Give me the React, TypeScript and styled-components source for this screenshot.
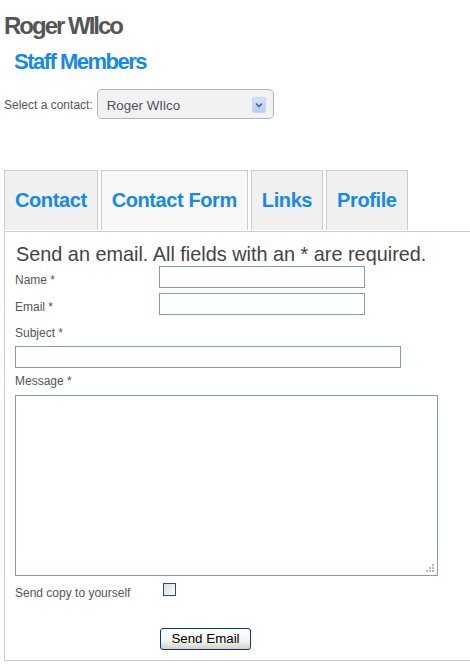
import React from 'react'
import styled, { createGlobalStyle } from 'styled-components'

const blue = '#168ae6'
const textGray = '#555'
const inputBorder = '#7f9db9'

const GlobalStyle = createGlobalStyle`
  html, body {
    margin: 0;
    padding: 0;
    background: #fff;
    font-family: Arial, 'Liberation Sans', Helvetica, sans-serif;
    overflow: hidden;
  }
`

const Page = styled.div`
  padding-left: 4px;
`

const Title = styled.h1`
  margin: 12px 0 0 0;
  font-size: 24px;
  line-height: 28px;
  font-weight: 700;
  letter-spacing: -2px;
  color: ${textGray};
`

const SubTitle = styled.h2`
  margin: 9px 0 0 0;
  padding-left: 10px;
  font-size: 22px;
  line-height: 26px;
  font-weight: 700;
  letter-spacing: -1.5px;
  color: ${blue};
`

const ContactRow = styled.div`
  margin-top: 14px;
  display: flex;
  align-items: center;
  gap: 4px;
`

const ContactLabel = styled.span`
  font-size: 12px;
  line-height: 14px;
  color: ${textGray};
  margin-top: 2px;
`

const SelectBox = styled.div`
  width: 177px;
  height: 30px;
  box-sizing: border-box;
  border: 1px solid #b4b4b4;
  border-radius: 5px;
  background: #f1f3f3;
  display: flex;
  align-items: center;
  justify-content: space-between;
  padding: 0 7px 0 9px;
`

const SelectValue = styled.span`
  font-size: 13.33px;
  color: #4f4f5f;
  margin-top: 2px;
`

const ArrowBox = styled.span`
  width: 14px;
  height: 16px;
  border-radius: 2px;
  background: linear-gradient(#d6e2fc, #b7cbf5);
  border: 1px solid #c6d6f7;
  box-sizing: border-box;
  display: flex;
  align-items: center;
  justify-content: center;
  margin-top: 2px;
`

const Tabs = styled.div`
  margin-top: 51px;
  display: flex;
  gap: 3px;
  margin-bottom: 1px;
`

const Tab = styled.div<{ $active?: boolean }>`
  height: 60px;
  box-sizing: border-box;
  padding: 0 10px;
  border: 1px solid #ccc;
  border-bottom: none;
  background: ${(p) => (p.$active ? '#f8f8f8' : '#f0f0f0')};
  font-size: 20px;
  line-height: 59px;
  font-weight: 700;
  letter-spacing: -0.4px;
  color: ${blue};
`

const Panel = styled.div`
  border: 1px solid #ccc;
  border-right: none;
  padding: 11px 0 10px 10px;
`

const Intro = styled.p`
  margin: 0 0 0 1px;
  font-size: 19.85px;
  line-height: 23px;
  color: #444;
`

const InlineRow = styled.div`
  display: grid;
  grid-template-columns: 144px auto;
  align-items: start;
  margin-bottom: 5px;
`

const Label = styled.label`
  display: block;
  font-size: 12px;
  line-height: 14px;
  color: ${textGray};
`

const InlineLabel = styled(Label)`
  padding-top: 6.5px;
`

const TextInput = styled.input<{ $width: number }>`
  display: block;
  margin: 0;
  width: ${(p) => p.$width}px;
  height: 22px;
  box-sizing: border-box;
  border: 1px solid ${inputBorder};
  padding: 2px 3px;
  font-family: inherit;
  font-size: 13px;
  background: #fff;
  outline: none;
`

const Stack = styled.div<{ $top: number }>`
  margin-top: ${(p) => p.$top}px;
`

const StackLabel = styled(Label)<{ $gap: number }>`
  margin-bottom: ${(p) => p.$gap}px;
`

const MessageWrap = styled.div`
  position: relative;
  width: 423px;
  height: 181px;
`

const MessageArea = styled.textarea`
  display: block;
  margin: 0;
  width: 423px;
  height: 181px;
  box-sizing: border-box;
  border: 1px solid ${inputBorder};
  resize: none;
  outline: none;
  font-family: inherit;
`

const Grip = styled.svg`
  position: absolute;
  right: 3px;
  bottom: 3px;
`

const CopyRow = styled.div`
  margin-top: 7px;
  display: grid;
  grid-template-columns: 144px auto;
  align-items: start;
`

const CopyLabel = styled(Label)`
  padding-top: 2.5px;
`

const CheckBox = styled.input`
  appearance: none;
  margin: 0 0 0 4px;
  width: 13px;
  height: 13px;
  box-sizing: border-box;
  border: 1px solid #1c5180;
  background: linear-gradient(135deg, #dcdcd7, #fbfbf9);
`

const ButtonRow = styled.div`
  margin-top: 28px;
  padding-left: 145px;
`

const SendButton = styled.button`
  width: 91px;
  height: 22px;
  padding: 0;
  border: 1px solid #003c74;
  border-radius: 3px;
  background: linear-gradient(#ffffff, #f3f3ef 60%, #d6d0c5);
  font-family: inherit;
  font-size: 13.33px;
  color: #000;
`

const tabs = ['Contact', 'Contact Form', 'Links', 'Profile']

export default function App() {
  return (
    <Page>
      <GlobalStyle />
      <Title>Roger WIlco</Title>
      <SubTitle>Staff Members</SubTitle>

      <ContactRow>
        <ContactLabel>Select a contact:</ContactLabel>
        <SelectBox>
          <SelectValue>Roger WIlco</SelectValue>
          <ArrowBox>
            <svg width="8" height="6" viewBox="0 0 8 6">
              <path d="M1 1.5 L4 4.5 L7 1.5" fill="none" stroke="#4d6185" strokeWidth="1.6" />
            </svg>
          </ArrowBox>
        </SelectBox>
      </ContactRow>

      <Tabs>
        {tabs.map((t) => (
          <Tab key={t} $active={t === 'Contact Form'}>
            {t}
          </Tab>
        ))}
      </Tabs>

      <Panel>
        <Intro>Send an email. All fields with an * are required.</Intro>

        <InlineRow>
          <InlineLabel>Name *</InlineLabel>
          <TextInput $width={206} />
        </InlineRow>
        <InlineRow>
          <InlineLabel>Email *</InlineLabel>
          <TextInput $width={206} />
        </InlineRow>

        <Stack $top={11}>
          <StackLabel $gap={6}>Subject *</StackLabel>
          <TextInput $width={386} />
        </Stack>

        <Stack $top={6}>
          <StackLabel $gap={7}>Message *</StackLabel>
          <MessageWrap>
            <MessageArea />
            <Grip width="9" height="9" viewBox="0 0 9 9">
              <rect x="6" y="0" width="2" height="2" fill="#b8b8b8" />
              <rect x="3" y="3" width="2" height="2" fill="#b8b8b8" />
              <rect x="6" y="3" width="2" height="2" fill="#b8b8b8" />
              <rect x="0" y="6" width="2" height="2" fill="#b8b8b8" />
              <rect x="3" y="6" width="2" height="2" fill="#b8b8b8" />
              <rect x="6" y="6" width="2" height="2" fill="#b8b8b8" />
            </Grip>
          </MessageWrap>
        </Stack>

        <CopyRow>
          <CopyLabel>Send copy to yourself</CopyLabel>
          <CheckBox type="checkbox" />
        </CopyRow>

        <ButtonRow>
          <SendButton>Send Email</SendButton>
        </ButtonRow>
      </Panel>
    </Page>
  )
}
